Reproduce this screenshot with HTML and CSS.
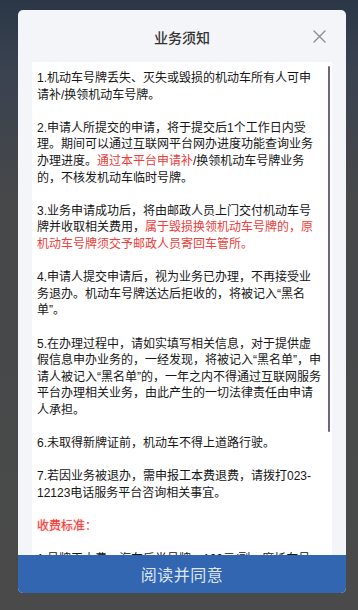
FILE: index.html
```html
<!DOCTYPE html>
<html lang="zh-CN">
<head>
<meta charset="utf-8">
<title>业务须知</title>
<link rel="stylesheet" href="styles.css">
</head>
<body>
<div class="screen">
  <div class="modal">
    <div class="header">
      <h1 class="title">业务须知</h1>
      <span class="close" aria-label="关闭">
        <svg width="13" height="13" viewBox="0 0 13 13"><path d="M1 1L12 12M12 1L1 12" stroke="#8a8d93" stroke-width="1.4" fill="none" stroke-linecap="round"/></svg>
      </span>
    </div>
    <div class="panel">
      <div class="content">
        <p>1.机动车号牌丢失、灭失或毁损的机动车所有人可申请补/换领机动车号牌。</p>
        <p>2.申请人所提交的申请，将于提交后1个工作日内受理。期间可以通过互联网平台网办进度功能查询业务办理进度。<span class="red">通过本平台申请补</span>/换领机动车号牌业务的，不核发机动车临时号牌。</p>
        <p>3.业务申请成功后，将由邮政人员上门交付机动车号牌并收取相关费用，<span class="red">属于毁损换领机动车号牌的，原机动车号牌须交予邮政人员寄回车管所。</span></p>
        <p>4.申请人提交申请后，视为业务已办理，不再接受业务退办。机动车号牌送达后拒收的，将被记入“黑名单”。</p>
        <p>5.在办理过程中，请如实填写相关信息，对于提供虚假信息申办业务的，一经发现，将被记入“黑名单”，申请人被记入“黑名单”的，一年之内不得通过互联网服务平台办理相关业务，由此产生的一切法律责任由申请人承担。</p>
        <p>6.未取得新牌证前，机动车不得上道路行驶。</p>
        <p>7.若因业务被退办，需申报工本费退费，请拨打023-12123电话服务平台咨询相关事宜。</p>
        <p><span class="red label">收费标准</span><span class="red">：</span></p>
        <p>1.号牌工本费：汽车后半号牌：100元/副；摩托车号牌：40元/面。</p>
      </div>
      <div class="thumb"></div>
    </div>
    <div class="agree">阅读并同意</div>
  </div>
</div>
</body>
</html>
```

FILE: styles.css
```css
* { box-sizing: border-box; }
html, body { margin: 0; padding: 0; }
body {
  width: 358px;
  height: 610px;
  overflow: hidden;
  font-family: "Noto Sans CJK SC", "Noto Sans", sans-serif;
  background: linear-gradient(180deg, #2b3747 0px, #3a4250 70px, #464849 200px, #4a4a4a 610px);
}
.screen {
  height: 610px;
  padding: 10px 12px 0 18px;
}
.modal {
  width: 328px;
  height: 583px;
  background: #f3f5f8;
  border-radius: 5px;
  overflow: hidden;
  display: flex;
  flex-direction: column;
}
.header {
  height: 52px;
  display: grid;
  grid-template-columns: 1fr auto 1fr;
  align-items: center;
  padding-top: 1px;
}
.title {
  grid-column: 2;
  margin: 0;
  font-size: 14px;
  font-weight: 500;
  color: #333;
  line-height: 20px;
}
.close {
  grid-column: 3;
  justify-self: end;
  margin-right: 20px;
  width: 13px;
  height: 13px;
  display: flex;
}
.panel {
  flex: 1;
  margin: 0 14px;
  background: #ffffff;
  position: relative;
  overflow: hidden;
}
.content {
  width: 290px;
  padding: 8px 0 0 5px;
  font-family: "Liberation Sans", "Noto Sans CJK SC", sans-serif;
  font-size: 12px;
  line-height: 16.6px;
  color: #161616;
}
.content p {
  margin: 0 0 16.6px 0;
}
.red { color: #ee3d3a; }
.label { text-shadow: 0 0 2px rgba(238, 61, 58, 0.5); }
.thumb {
  position: absolute;
  right: 2px;
  top: 4px;
  width: 2.5px;
  height: 366px;
  background: #6d6580;
  border-radius: 1px;
}
.agree {
  height: 38px;
  flex: none;
  background: #3366b1;
  color: #dfe6f1;
  font-size: 16px;
  display: flex;
  align-items: center;
  justify-content: center;
  letter-spacing: 0.5px;
}
```
